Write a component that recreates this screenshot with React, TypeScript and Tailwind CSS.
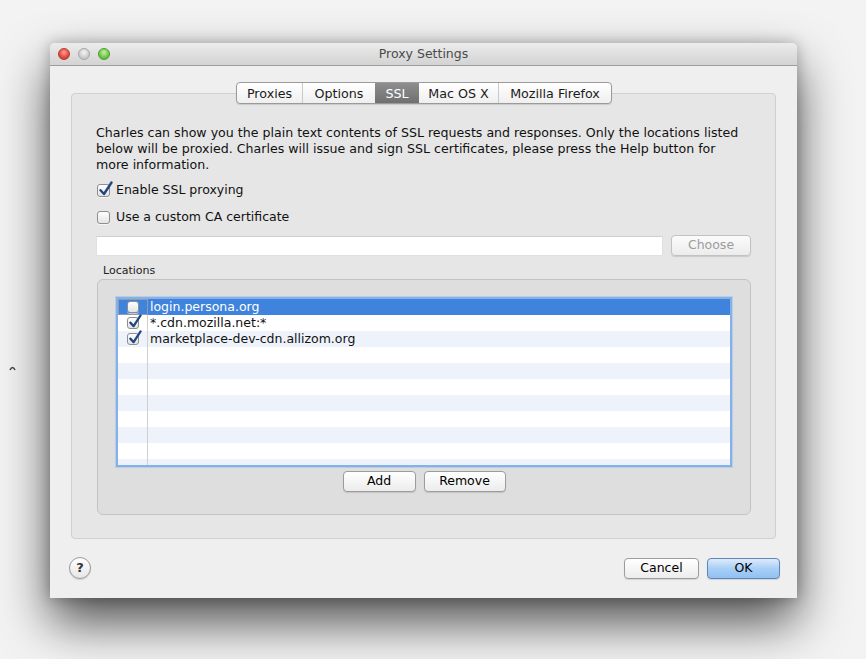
import React from "react";

const font = { fontFamily: '"DejaVu Sans", "Liberation Sans", sans-serif' };

function Check({ checked, small }: { checked: boolean; small?: boolean }) {
  const s = small ? 12 : 13;
  return (
    <span className="relative inline-block shrink-0" style={{ width: s, height: s }}>
      <span className="absolute inset-0 rounded-[3px] border border-[#8e8e8e] bg-gradient-to-b from-white to-[#e4e4e4] shadow-[0_1px_0_rgba(255,255,255,0.6)]" />
      {checked && (
        <svg className="absolute" style={{ left: 1, top: -3 }} width={s + 2} height={s + 3} viewBox="0 0 15 16">
          <path d="M2.5 9.2 L6 13 L13.5 1.5" fill="none" stroke="#24467f" strokeWidth="2.4" strokeLinecap="round" strokeLinejoin="round" />
        </svg>
      )}
    </span>
  );
}

function Btn({ children, w, disabled, primary }: { children: React.ReactNode; w: number; disabled?: boolean; primary?: boolean }) {
  return (
    <div
      className={
        "h-[21px] flex items-center justify-center rounded-[4px] border text-[12.5px] shadow-[0_1px_1px_rgba(0,0,0,0.12)] " +
        (primary
          ? "border-[#5f86b8] bg-gradient-to-b from-[#dcebfc] via-[#a9cff6] to-[#8fc0f2] text-black"
          : disabled
          ? "border-[#c2c2c2] bg-gradient-to-b from-[#fbfbfb] to-[#ececec] text-[#9c9c9c]"
          : "border-[#9c9c9c] bg-gradient-to-b from-white to-[#ececec] text-black")
      }
      style={{ width: w }}
    >
      {children}
    </div>
  );
}

const rows = [
  { checked: false, text: "login.persona.org" },
  { checked: true, text: "*.cdn.mozilla.net:*" },
  { checked: true, text: "marketplace-dev-cdn.allizom.org" },
  null, null, null, null, null, null, null, null,
];

export default function App() {
  const tabs = [
    { label: "Proxies", w: 65 },
    { label: "Options", w: 73 },
    { label: "SSL", w: 44, sel: true },
    { label: "Mac OS X", w: 79 },
    { label: "Mozilla Firefox", w: 113 },
  ];
  return (
    <div className="relative w-[866px] h-[659px] bg-[#f3f3f3] pl-[50px] pt-[43px] overflow-hidden" style={font}>
      <svg className="absolute left-[9px] top-[365px]" width="7" height="6" viewBox="0 0 7 6">
        <path d="M1 5 Q3.5 0 6 5" fill="none" stroke="#444" strokeWidth="1.6" />
      </svg>
      <div className="w-[747px] h-[555px] flex flex-col rounded-t-[5px] bg-[#efefef] shadow-[0_24px_50px_rgba(0,0,0,0.68),0_0_14px_rgba(0,0,0,0.25)]">
        {/* title bar */}
        <div className="h-[23px] grid grid-cols-[1fr_auto_1fr] items-center rounded-t-[5px] bg-gradient-to-b from-[#ececec] to-[#d3d3d3] border-b border-[#9e9e9e]">
          <div className="flex items-center gap-[8px] pl-[8px]">
            <span className="w-[12px] h-[12px] rounded-full border border-[#b03a33] bg-[radial-gradient(circle_at_50%_35%,#ff9d93,#e2463d_60%,#c7352d)]" />
            <span className="w-[12px] h-[12px] rounded-full border border-[#a6a6a6] bg-[radial-gradient(circle_at_50%_35%,#f4f4f4,#cdcdcd_60%,#b9b9b9)]" />
            <span className="w-[12px] h-[12px] rounded-full border border-[#4f9a32] bg-[radial-gradient(circle_at_50%_35%,#c6f3a2,#6cc447_60%,#52a631)]" />
          </div>
          <div className="text-[12.5px] text-[#4a4a4a]">Proxy Settings</div>
          <div />
        </div>
        {/* body */}
        <div className="flex-1 flex flex-col px-[21px] pt-[16px]">
          <div className="relative z-10 flex justify-center pl-[1px]">
            <div className="flex h-[22px] rounded-[4px] border border-[#9a9a9a] bg-gradient-to-b from-white to-[#efefef] overflow-hidden shadow-[0_1px_1px_rgba(0,0,0,0.12)]">
              {tabs.map((t, i) => (
                <div
                  key={t.label}
                  className={
                    "flex items-center justify-center pt-[2px] text-[12.7px] " +
                    (t.sel
                      ? "bg-gradient-to-b from-[#8e8e8e] to-[#707070] text-white"
                      : "text-[#1a1a1a]") +
                    (i > 0 && !t.sel && !tabs[i - 1].sel ? " border-l border-[#c9c9c9]" : "")
                  }
                  style={{ width: t.w }}
                >
                  {t.label}
                </div>
              ))}
            </div>
          </div>
          <div className="-mt-[11px] h-[446px] rounded-[4px] border border-[#d0d0d0] bg-[#e6e6e6] pt-[31px] pl-[24px] pr-[24px] flex flex-col">
            <p className="text-[12.6px] leading-[16px] text-[#111] whitespace-nowrap">
              Charles can show you the plain text contents of SSL requests and responses. Only the locations listed
              <br />
              below will be proxied. Charles will issue and sign SSL certificates, please press the Help button for
              <br />
              more information.
            </p>
            <div className="mt-[9px] h-[16px] flex items-center gap-[6px] pl-[1px] text-[12.5px] text-[#111]">
              <Check checked />
              <span>Enable SSL proxying</span>
            </div>
            <div className="mt-[11px] h-[16px] flex items-center gap-[6px] pl-[1px] text-[12.5px] text-[#111]">
              <Check checked={false} />
              <span>Use a custom CA certificate</span>
            </div>
            <div className="mt-[10px] flex items-center gap-[8px]">
              <div className="w-[567px] h-[20px] bg-white border border-[#e0e0e0] border-t-[#cfcfcf]" />
              <Btn w={80} disabled>
                Choose
              </Btn>
            </div>
            <div className="mt-[8px] h-[14px] pl-[7px] text-[11px] leading-[14px] text-[#222]">Locations</div>
            <div className="mt-[1px] ml-[1px] h-[236px] rounded-[6px] border border-[#c3c3c3] bg-[#dedede] pt-[17px] px-[18px] flex flex-col items-center">
              <div className="w-[616px] h-[170px] border-2 border-[#84b1e8] bg-white overflow-hidden shadow-[0_0_0_1px_#b9cde6]">
                {rows.map((r, i) => {
                  const sel = i === 0;
                  const bg = sel ? "bg-[#3f83dc]" : i % 2 === 0 ? "bg-[#eef3fb]" : "bg-white";
                  return (
                    <div key={i} className={"h-[16px] flex " + bg}>
                      <div
                        className={
                          "w-[30px] h-[16px] flex items-center justify-center border-r " +
                          (sel ? "border border-[#8c9bb0] bg-[#3f83dc]" : "border-[#cfcfcf]")
                        }
                      >
                        {r && <Check checked={r.checked} small />}
                      </div>
                      <div className={"pl-[2px] text-[12.5px] leading-[16px] " + (sel ? "text-white" : "text-[#111]")}>
                        {r ? r.text : ""}
                      </div>
                    </div>
                  );
                })}
              </div>
              <div className="mt-[4px] flex gap-[8px]">
                <Btn w={73}>Add</Btn>
                <Btn w={82}>Remove</Btn>
              </div>
            </div>
          </div>
          <div className="mt-[18px] flex items-center">
            <div className="ml-[-2px] w-[22px] h-[22px] rounded-full border border-[#9a9a9a] bg-gradient-to-b from-white to-[#e6e6e6] flex items-center justify-center text-[13px] font-bold text-[#333] shadow-[0_1px_1px_rgba(0,0,0,0.15)]">
              ?
            </div>
            <div className="flex-1" />
            <div className="flex gap-[8px] mr-[-4px]">
              <Btn w={75}>Cancel</Btn>
              <Btn w={73} primary>
                OK
              </Btn>
            </div>
          </div>
        </div>
      </div>
    </div>
  );
}
